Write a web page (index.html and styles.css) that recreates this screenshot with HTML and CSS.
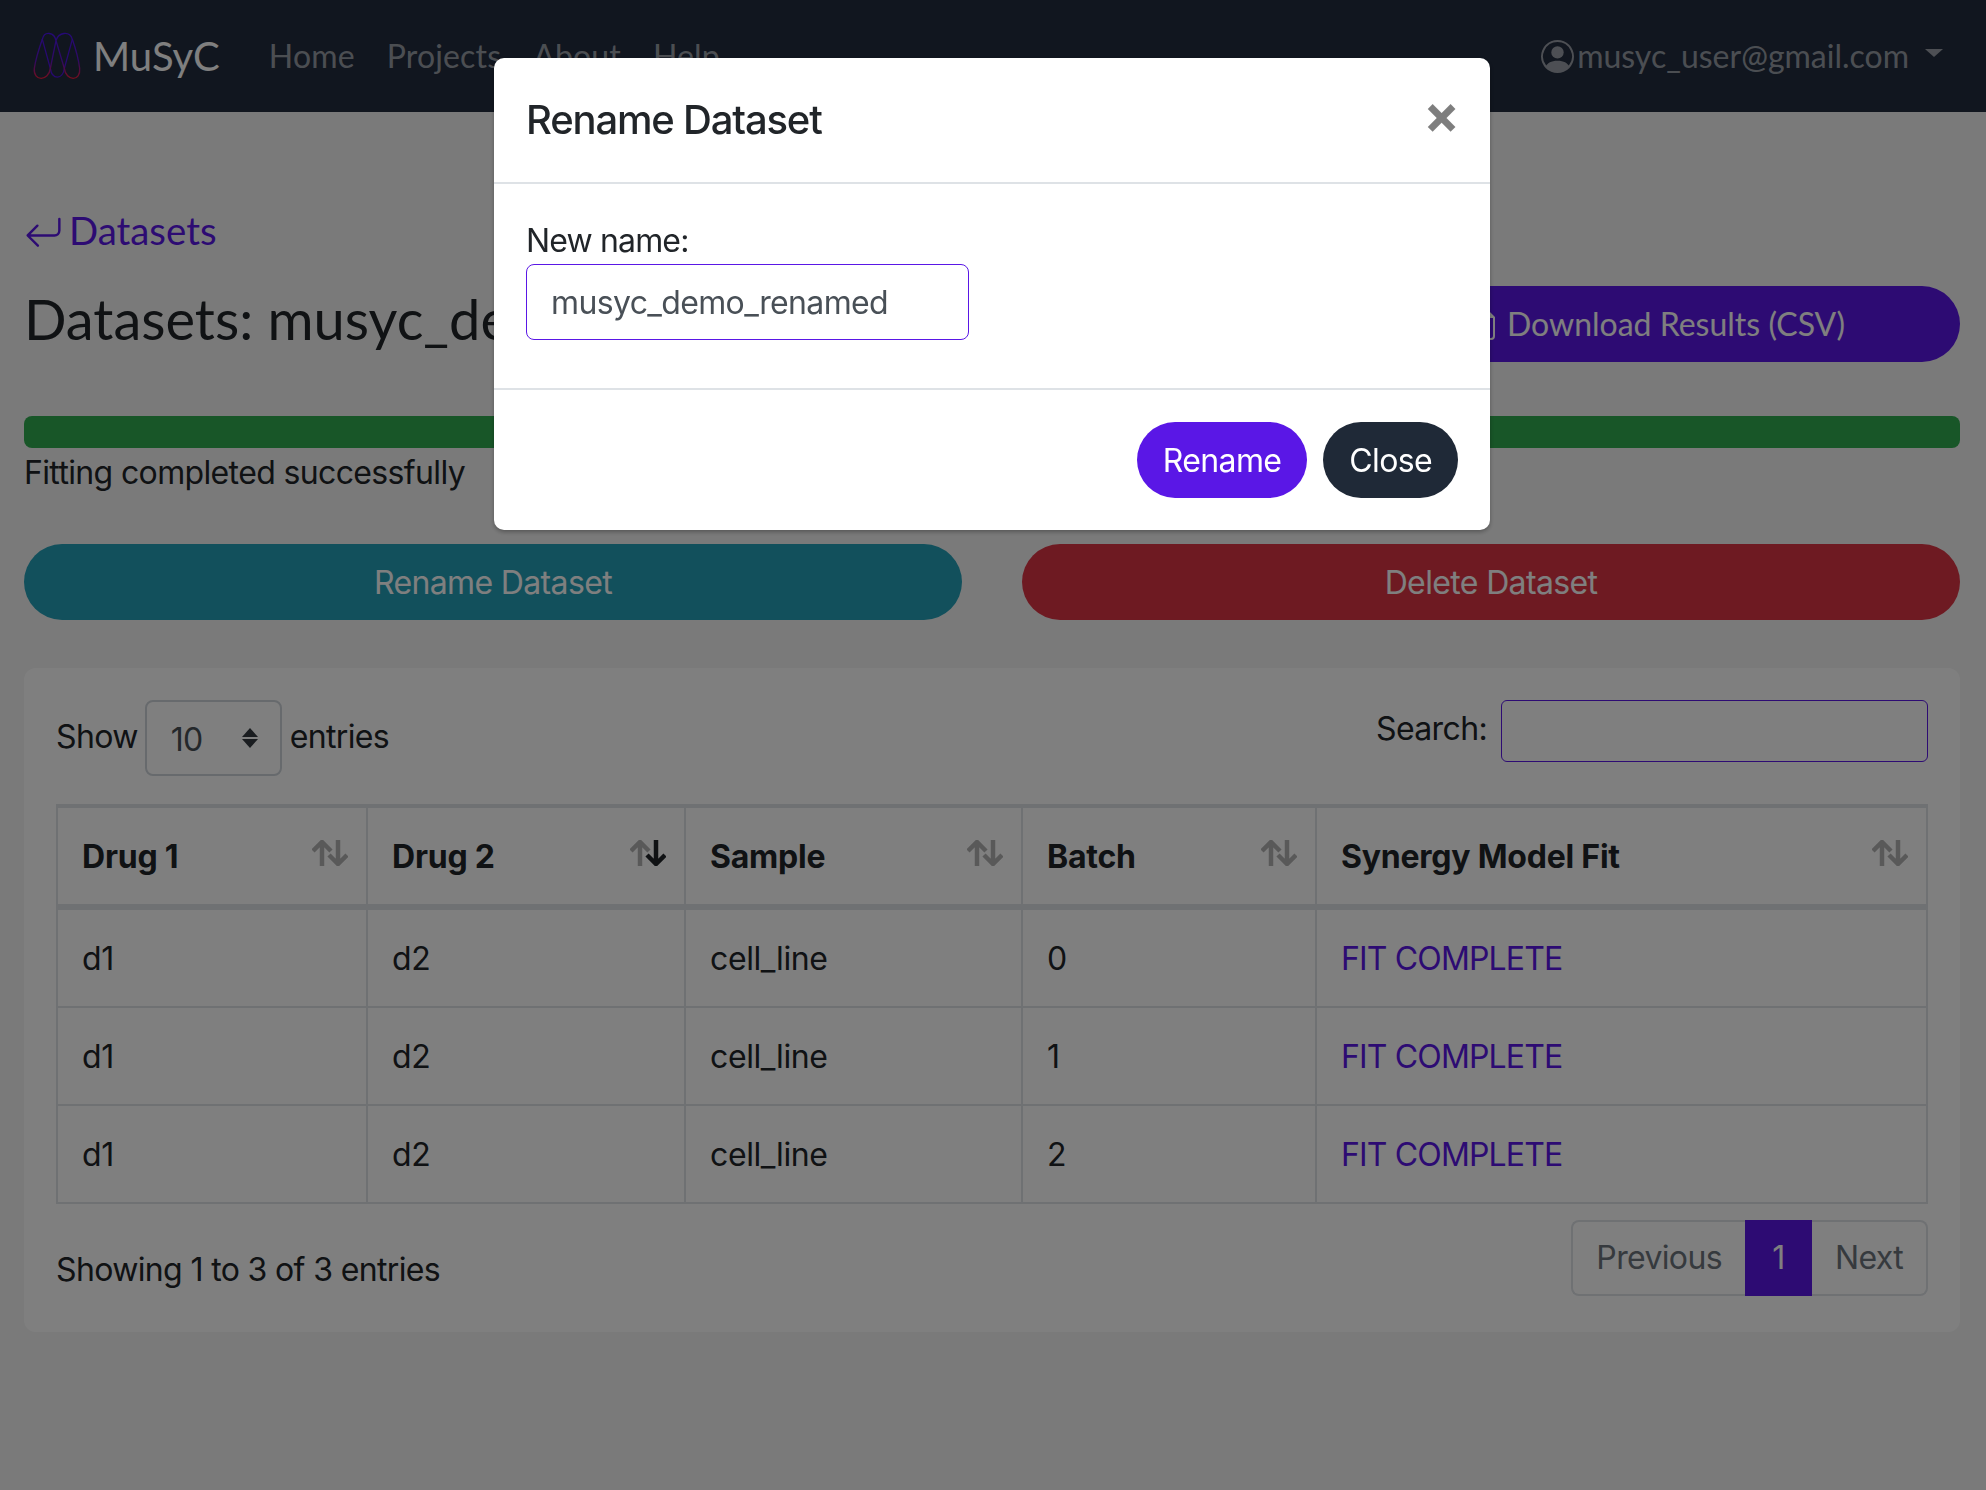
FILE: index.html
```html
<!DOCTYPE html>
<html lang="en">
<head>
  <meta charset="UTF-8" />
  <title>MuSyC - Datasets</title>
  <link rel="stylesheet" href="styles.css">
</head>
<body>
  <nav class="navbar">
    <a class="brand" href="#">
      <svg class="brand-logo" viewBox="96 96 144 144" fill="none" stroke-width="4">
        <defs>
          <linearGradient id="logoGrad" gradientUnits="userSpaceOnUse" x1="0" y1="100" x2="0" y2="238">
            <stop offset="0" stop-color="#4a12ee" />
            <stop offset="0.6" stop-color="#6014c8" />
            <stop offset="1" stop-color="#f01c34" />
          </linearGradient>
        </defs>
        <path stroke="#4e12e0" d="M124 118 L148 205 C153 240 186 240 190 205 L214 118" />
        <path stroke="url(#logoGrad)" d="M100 205 C104 178 118 135 124 118 C130 92 160 96 165 122 L190 205 C195 245 240 245 236 205 C232 175 220 135 214 118 C206 92 172 96 165 122 L148 205 C143 245 96 245 100 205 Z" />
      </svg>
      <span>MuSyC</span>
    </a>
    <ul class="nav-links">
      <li><a href="#">Home</a></li>
      <li><a href="#">Projects</a></li>
      <li><a href="#">About</a></li>
      <li><a href="#">Help</a></li>
    </ul>
    <a class="nav-user" href="#">
      <svg class="user-icon" viewBox="0 0 16 16" fill="currentColor">
        <path d="M11 6a3 3 0 1 1-6 0 3 3 0 0 1 6 0z" />
        <path fill-rule="evenodd" d="M0 8a8 8 0 1 1 16 0A8 8 0 0 1 0 8zm8-7a7 7 0 0 0-5.468 11.37C3.242 11.226 4.805 10 8 10s4.757 1.225 5.468 2.37A7 7 0 0 0 8 1z" />
      </svg>
      <span>musyc_user@gmail.com</span>
      <i class="caret"></i>
    </a>
  </nav>

  <main>
    <a class="back-link" href="#">
      <svg class="back-icon" viewBox="0 0 16 16" fill="currentColor">
        <path fill-rule="evenodd" d="M14.5 1.5a.5.5 0 0 1 .5.5v4.8a2.5 2.5 0 0 1-2.5 2.5H2.707l3.347 3.346a.5.5 0 0 1-.708.708l-4.2-4.2a.5.5 0 0 1 0-.708l4-4a.5.5 0 1 1 .708.708L2.707 8.3H12.5A1.5 1.5 0 0 0 14 6.8V2a.5.5 0 0 1 .5-.5z" />
      </svg>
      <span>Datasets</span>
    </a>

    <div class="title-row">
      <h1>Datasets: musyc_demo</h1>
      <a class="btn btn-primary btn-download" href="#">
        <svg class="dl-icon" viewBox="0 0 16 16" fill="currentColor">
          <path d="M14 4.5V14a2 2 0 0 1-2 2H4a2 2 0 0 1-2-2V2a2 2 0 0 1 2-2h5.5L14 4.5zM13 14V5h-3.5V1H4a1 1 0 0 0-1 1v12a1 1 0 0 0 1 1h8a1 1 0 0 0 1-1z" />
        </svg>
        Download Results (CSV)
      </a>
    </div>

    <div class="progress"></div>
    <p class="status">Fitting completed successfully</p>

    <div class="actions">
      <a class="btn btn-info" href="#">Rename Dataset</a>
      <a class="btn btn-danger" href="#">Delete Dataset</a>
    </div>

    <section class="card">
      <div class="table-top">
        <div class="length">
          <span>Show</span>
          <div class="select-wrap">
            <select class="length-select">
              <option>10</option>
              <option>25</option>
              <option>50</option>
            </select>
            <svg class="select-arrows" viewBox="0 0 16 20" fill="currentColor">
              <path d="M8 0 L16 9 H0 Z" />
              <path d="M8 20 L16 11 H0 Z" />
            </svg>
          </div>
          <span>entries</span>
        </div>
        <label class="search">Search: <input type="text" class="search-input" /></label>
      </div>

      <table class="data-table">
        <colgroup>
          <col class="col-drug1" />
          <col class="col-drug2" />
          <col class="col-sample" />
          <col class="col-batch" />
          <col />
        </colgroup>
        <thead>
          <tr>
            <th><div class="th-inner">Drug 1<svg class="sort" viewBox="0 0 36 26"><path class="sort-up" d="M10 26V2M1 11l9-9 9 9" /><path class="sort-down" d="M26 0v24M17 15l9 9 9-9" /></svg></div></th>
            <th><div class="th-inner">Drug 2<svg class="sort sort-desc" viewBox="0 0 36 26"><path class="sort-up" d="M10 26V2M1 11l9-9 9 9" /><path class="sort-down" d="M26 0v24M17 15l9 9 9-9" /></svg></div></th>
            <th><div class="th-inner">Sample<svg class="sort" viewBox="0 0 36 26"><path class="sort-up" d="M10 26V2M1 11l9-9 9 9" /><path class="sort-down" d="M26 0v24M17 15l9 9 9-9" /></svg></div></th>
            <th><div class="th-inner">Batch<svg class="sort" viewBox="0 0 36 26"><path class="sort-up" d="M10 26V2M1 11l9-9 9 9" /><path class="sort-down" d="M26 0v24M17 15l9 9 9-9" /></svg></div></th>
            <th><div class="th-inner">Synergy Model Fit<svg class="sort" viewBox="0 0 36 26"><path class="sort-up" d="M10 26V2M1 11l9-9 9 9" /><path class="sort-down" d="M26 0v24M17 15l9 9 9-9" /></svg></div></th>
          </tr>
        </thead>
        <tbody>
          <tr><td>d1</td><td>d2</td><td>cell_line</td><td>0</td><td><a href="#">FIT COMPLETE</a></td></tr>
          <tr><td>d1</td><td>d2</td><td>cell_line</td><td>1</td><td><a href="#">FIT COMPLETE</a></td></tr>
          <tr><td>d1</td><td>d2</td><td>cell_line</td><td>2</td><td><a href="#">FIT COMPLETE</a></td></tr>
        </tbody>
      </table>

      <div class="table-bottom">
        <div class="info">Showing 1 to 3 of 3 entries</div>
        <ul class="pagination">
          <li class="page-item"><a href="#">Previous</a></li>
          <li class="page-item active"><a href="#">1</a></li>
          <li class="page-item"><a href="#">Next</a></li>
        </ul>
      </div>
    </section>
  </main>

  <div class="modal-backdrop">
    <div class="modal">
      <div class="modal-header">
        <h5>Rename Dataset</h5>
        <button class="close" type="button">&times;</button>
      </div>
      <div class="modal-body">
        <label for="newName">New name:</label>
        <input type="text" id="newName" value="musyc_demo_renamed" />
      </div>
      <div class="modal-footer">
        <a class="btn btn-primary" href="#">Rename</a>
        <a class="btn btn-dark" href="#">Close</a>
      </div>
    </div>
  </div>
</body>
</html>
```

FILE: styles.css
```css
:root {
  --primary: #5a17e6;
  --dark: #1f2937;
  --text: #212529;
  --muted: #6c757d;
  --border: #dee2e6;
}

* {
  box-sizing: border-box;
}

html, body {
  height: 100%;
}

body {
  margin: 0;
  font-family: Inter, "Liberation Sans", sans-serif;
  font-size: 32px;
  line-height: 48px;
  letter-spacing: -0.64px;
  color: var(--text);
  background-color: #f5f5f5;
  overflow: hidden;
}

a {
  color: var(--primary);
  text-decoration: none;
}

/* navbar */
.navbar {
  height: 112px;
  display: flex;
  align-items: center;
  padding: 0 24px 0 33px;
  background-color: #222c3e;
  font-family: Lato, sans-serif;
  letter-spacing: 0;
}

.brand {
  display: flex;
  align-items: center;
  color: #fff;
  font-size: 40px;
}

.brand-logo {
  width: 48px;
  height: 48px;
  margin-right: 12px;
}

.nav-links {
  display: flex;
  gap: 32px;
  list-style: none;
  margin: 0 0 0 49px;
  padding: 0;
  letter-spacing: 0.15px;
}

.nav-links a,
.nav-user {
  color: rgba(255, 255, 255, 0.55);
}

.nav-user {
  display: flex;
  align-items: center;
  margin-left: auto;
  margin-right: 19px;
}

.user-icon {
  width: 33px;
  height: 33px;
  margin-right: 3px;
}

.caret {
  width: 0;
  height: 0;
  margin-left: 16px;
  margin-bottom: 6px;
  border-top: 8px solid;
  border-left: 9px solid transparent;
  border-right: 9px solid transparent;
}

/* page */
main {
  padding: 88px 26px 0 24px;
}

.back-link {
  display: flex;
  align-items: center;
  font-family: Lato, sans-serif;
  font-size: 38.4px;
  letter-spacing: 0;
  height: 60px;
}

.back-icon {
  width: 39px;
  height: 39px;
  margin: 6px 6px 0 0;
}

.title-row {
  display: flex;
  align-items: center;
  justify-content: space-between;
  margin-top: 26px;
}

h1 {
  margin: -11px 0 0;
  font-family: Lato, sans-serif;
  font-size: 56px;
  font-weight: 400;
  line-height: 76px;
  letter-spacing: 0;
}

.btn {
  display: flex;
  align-items: center;
  justify-content: center;
  height: 76px;
  padding: 2px 26px 0;
  border-radius: 38px;
  color: #fff;
}

.btn-primary {
  background-color: var(--primary);
}

.btn-dark {
  background-color: var(--dark);
}

.btn-info {
  background-color: #24a0b8;
}

.btn-danger {
  background-color: #dc3545;
}

.btn-download {
  width: 596px;
  padding: 0 38px 0 26px;
  font-family: Lato, sans-serif;
  letter-spacing: 0;
}

.dl-icon {
  width: 32px;
  height: 32px;
  margin-right: 8px;
}

.progress {
  height: 32px;
  margin-top: 54px;
  border-radius: 8px;
  background-color: #30ac50;
}

.status {
  margin: 1px 0 0;
}

.actions {
  display: grid;
  grid-template-columns: 1fr 1fr;
  gap: 60px;
  margin-top: 47px;
}

/* table card */
.card {
  margin-top: 48px;
  padding: 32px 32px 36px;
  border-radius: 12px;
  background-color: #fff;
}

.table-top {
  display: flex;
  justify-content: space-between;
  align-items: flex-start;
  height: 104px;
}

.length {
  display: flex;
  align-items: center;
  gap: 8px;
}

.length > span {
  margin-top: -2px;
}

.select-wrap {
  position: relative;
  margin-left: -1px;
}

.length-select {
  display: block;
  width: 137px;
  height: 76px;
  padding: 4px 0 0 24px;
  appearance: none;
  font: inherit;
  letter-spacing: inherit;
  color: #495057;
  background-color: #fff;
  border: 2px solid #ced4da;
  border-radius: 8px;
}

.select-arrows {
  position: absolute;
  right: 24px;
  top: 28px;
  width: 16px;
  height: 20px;
  color: #343a40;
}

.search {
  display: flex;
  align-items: flex-start;
  gap: 14px;
  line-height: 58px;
}

.search-input {
  width: 427px;
  height: 62px;
  background-color: #fff;
  border: 1px solid var(--primary);
  border-radius: 6px;
  outline: none;
}

.data-table {
  width: 100%;
  table-layout: fixed;
  border-collapse: collapse;
  border-top: 4px solid var(--border);
}

.col-drug1 { width: 310px; }
.col-drug2 { width: 318px; }
.col-sample { width: 337px; }
.col-batch { width: 294px; }

.data-table th,
.data-table td {
  border: 2px solid var(--border);
  padding: 25px 24px 23px;
  text-align: left;
}

.data-table th {
  height: 101px;
  padding: 0 18px 0 24px;
  border-top: none;
  border-bottom-width: 6px;
  font-weight: 700;
  letter-spacing: -0.22px;
}

.th-inner {
  display: flex;
  align-items: flex-start;
  justify-content: space-between;
  padding-top: 1px;
}

.sort {
  flex: none;
  width: 36px;
  height: 26px;
  margin-top: 7px;
  fill: none;
  stroke: #000;
  stroke-width: 4.5;
}

.sort-up,
.sort-down {
  opacity: 0.3;
}

.sort-desc .sort-down {
  stroke: #212529;
  opacity: 1;
}

.data-table td {
  height: 97px;
  letter-spacing: -0.4px;
}

.data-table td a {
  letter-spacing: -0.84px;
}

.table-bottom {
  display: flex;
  justify-content: space-between;
  align-items: flex-start;
  margin-top: 16px;
}

.info {
  margin-top: 26px;
}

.pagination {
  display: flex;
  list-style: none;
  margin: 0;
  padding: 0;
}

.page-item a {
  display: block;
  height: 76px;
  padding: 12px 23px;
  color: var(--muted);
  border: 2px solid var(--border);
}

.page-item:first-child a {
  border-radius: 8px 0 0 8px;
  border-right: none;
}

.page-item:last-child a {
  border-radius: 0 8px 8px 0;
  border-left: none;
}

.page-item.active a {
  width: 67px;
  text-align: center;
  padding: 12px 0;
  color: #fff;
  background-color: var(--primary);
  border-color: var(--primary);
}

/* modal */
.modal-backdrop {
  position: fixed;
  inset: 0;
  display: flex;
  justify-content: center;
  align-items: flex-start;
  padding: 58px 2px 0 0;
  background-color: rgba(0, 0, 0, 0.5);
}

.modal {
  width: 996px;
  background-color: #fff;
  border-radius: 10px;
  box-shadow: 0 2px 4px rgba(0, 0, 0, 0.3);
}

.modal-header {
  display: flex;
  justify-content: space-between;
  align-items: center;
  height: 126px;
  padding: 0 32px;
  border-bottom: 2px solid var(--border);
}

.modal-header h5 {
  margin: 0;
  font-size: 40px;
  font-weight: 500;
  line-height: 60px;
  letter-spacing: -1.18px;
}

.close {
  padding: 0;
  border: none;
  background: none;
  font-family: Inter, sans-serif;
  font-size: 54px;
  font-weight: 700;
  line-height: 48px;
  color: #000;
  opacity: 0.5;
  margin: -12px -2px 0 0;
}

.modal-body {
  padding: 30px 32px 48px;
}

.modal-body label {
  display: block;
  height: 50px;
  line-height: 54px;
  letter-spacing: -0.85px;
}

.modal-body input {
  display: block;
  width: 443px;
  height: 76px;
  padding: 0 24px;
  font: inherit;
  letter-spacing: inherit;
  color: #495057;
  border: 1px solid var(--primary);
  border-radius: 8px;
  outline: none;
}

.modal-footer {
  display: flex;
  justify-content: flex-end;
  gap: 16px;
  padding: 32px;
  border-top: 2px solid var(--border);
}
```
